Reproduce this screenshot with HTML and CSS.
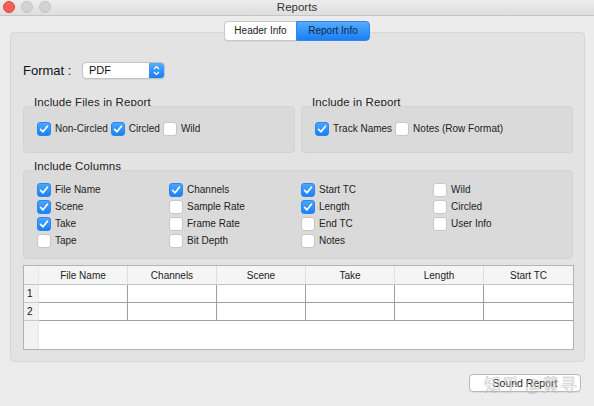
FILE: index.html
```html
<!DOCTYPE html>
<html>
<head>
<meta charset="utf-8">
<title>Reports</title>
<link rel="stylesheet" href="styles.css">
</head>
<body>
<div class="window">
  <div class="titlebar">
    <div class="lights">
      <span class="light red"></span>
      <span class="light"></span>
      <span class="light"></span>
    </div>
    <div class="title">Reports</div>
    <div></div>
  </div>

  <div class="tabs">
    <div class="tab">Header Info</div>
    <div class="tab active">Report Info</div>
  </div>

  <div class="panel">
    <div class="format-row">
      <span class="format-label">Format :</span>
      <div class="popup">
        <span class="popup-value">PDF</span>
        <span class="popup-arrows">
          <svg width="7" height="11" viewBox="0 0 7 11"><path d="M1 4 L3.5 1.5 L6 4 M1 7 L3.5 9.5 L6 7" fill="none" stroke="#fff" stroke-width="1.2"/></svg>
        </span>
      </div>
    </div>

    <div class="two-groups">
      <div class="group">
        <div class="group-label">Include Files in Report</div>
        <div class="group-box inline-box">
          <label class="cb"><span class="box on"><svg viewBox="0 0 14 14"><path d="M3.6 7.4 L6 9.8 L10.4 4.2"/></svg></span>Non-Circled</label>
          <label class="cb"><span class="box on"><svg viewBox="0 0 14 14"><path d="M3.6 7.4 L6 9.8 L10.4 4.2"/></svg></span>Circled</label>
          <label class="cb"><span class="box"></span>Wild</label>
        </div>
      </div>
      <div class="group">
        <div class="group-label">Include in Report</div>
        <div class="group-box inline-box">
          <label class="cb"><span class="box on"><svg viewBox="0 0 14 14"><path d="M3.6 7.4 L6 9.8 L10.4 4.2"/></svg></span>Track Names</label>
          <label class="cb"><span class="box"></span>Notes (Row Format)</label>
        </div>
      </div>
    </div>

    <div class="group columns-group">
      <div class="group-label">Include Columns</div>
      <div class="group-box columns-box">
        <label class="cb"><span class="box on"><svg viewBox="0 0 14 14"><path d="M3.6 7.4 L6 9.8 L10.4 4.2"/></svg></span>File Name</label>
        <label class="cb"><span class="box on"><svg viewBox="0 0 14 14"><path d="M3.6 7.4 L6 9.8 L10.4 4.2"/></svg></span>Channels</label>
        <label class="cb"><span class="box on"><svg viewBox="0 0 14 14"><path d="M3.6 7.4 L6 9.8 L10.4 4.2"/></svg></span>Start TC</label>
        <label class="cb"><span class="box"></span>Wild</label>

        <label class="cb"><span class="box on"><svg viewBox="0 0 14 14"><path d="M3.6 7.4 L6 9.8 L10.4 4.2"/></svg></span>Scene</label>
        <label class="cb"><span class="box"></span>Sample Rate</label>
        <label class="cb"><span class="box on"><svg viewBox="0 0 14 14"><path d="M3.6 7.4 L6 9.8 L10.4 4.2"/></svg></span>Length</label>
        <label class="cb"><span class="box"></span>Circled</label>

        <label class="cb"><span class="box on"><svg viewBox="0 0 14 14"><path d="M3.6 7.4 L6 9.8 L10.4 4.2"/></svg></span>Take</label>
        <label class="cb"><span class="box"></span>Frame Rate</label>
        <label class="cb"><span class="box"></span>End TC</label>
        <label class="cb"><span class="box"></span>User Info</label>

        <label class="cb"><span class="box"></span>Tape</label>
        <label class="cb"><span class="box"></span>Bit Depth</label>
        <label class="cb"><span class="box"></span>Notes</label>
        <span></span>
      </div>
    </div>

    <table class="grid">
      <colgroup>
        <col class="c-num">
        <col class="c-data">
        <col class="c-data">
        <col class="c-data">
        <col class="c-data">
        <col class="c-data">
        <col class="c-data">
      </colgroup>
      <thead>
        <tr>
          <th class="num"></th>
          <th>File Name</th>
          <th>Channels</th>
          <th>Scene</th>
          <th>Take</th>
          <th>Length</th>
          <th class="last">Start TC</th>
        </tr>
      </thead>
      <tbody>
        <tr>
          <td class="num">1</td>
          <td></td><td></td><td></td><td></td><td></td><td class="last"></td>
        </tr>
        <tr>
          <td class="num">2</td>
          <td></td><td></td><td></td><td></td><td></td><td class="last"></td>
        </tr>
        <tr class="filler">
          <td class="num"></td>
          <td colspan="6"></td>
        </tr>
      </tbody>
    </table>
  </div>

  <div class="footer">
    <button class="btn">Sound Report</button>
    <span class="watermark">知乎 @黄寻</span>
  </div>
</div>
</body>
</html>
```

FILE: styles.css
```css
* { box-sizing: border-box; }

html, body {
  margin: 0;
  padding: 0;
  background: #ececec;
}

body {
  font-family: "Liberation Sans", Arial, "Noto Sans CJK SC", sans-serif;
  color: #222;
  width: 594px;
  height: 406px;
  overflow: hidden;
}

.window {
  width: 594px;
  height: 406px;
  display: flex;
  flex-direction: column;
}

/* title bar */
.titlebar {
  height: 16px;
  display: grid;
  grid-template-columns: 1fr auto 1fr;
  align-items: center;
  background: linear-gradient(#ececec, #dedede);
  border-bottom: 1px solid #c6c6c6;
}

.lights {
  display: flex;
  gap: 6px;
  padding-left: 3px;
  align-items: center;
  margin-top: -1px;
}

.light {
  width: 12px;
  height: 12px;
  border-radius: 50%;
  background: #d3d3d3;
  border: 1px solid #c4c4c4;
}

.light.red {
  background: #fc5d57;
  border-color: #e0443e;
}

.title {
  font-size: 11.5px;
  color: #333;
  line-height: 15px;
}

/* tabs */
.tabs {
  display: flex;
  justify-content: center;
  margin-top: 5px;
  position: relative;
  z-index: 2;
}

.tab {
  height: 20px;
  font-size: 10px;
  line-height: 18px;
  text-align: center;
  color: #1a1a1a;
}

.tab:first-child {
  width: 72px;
  background: #fff;
  border: 1px solid #c9c9c9;
  border-right: none;
  border-radius: 4px 0 0 4px;
  box-shadow: 0 1px 0 rgba(0,0,0,0.06);
}

.tab.active {
  width: 74px;
  background: linear-gradient(#55abff, #1a7ef6);
  border: 1px solid #2d87f0;
  border-radius: 0 4px 4px 0;
  color: #10264a;
}

/* panel */
.panel {
  margin: -9px 9px 0 10px;
  height: 330px;
  background: #e3e3e3;
  border: 1px solid #d6d6d6;
  border-radius: 4px;
  padding: 29px 11px 0 12px;
  display: flex;
  flex-direction: column;
}

.format-row {
  display: flex;
  align-items: center;
  height: 17px;
}

.format-label {
  font-size: 13px;
  width: 59px;
  color: #111;
}

.popup {
  width: 83px;
  height: 17px;
  display: flex;
  background: #fff;
  border: 1px solid #c3c3c3;
  border-radius: 4px;
  box-shadow: 0 1px 0 rgba(0,0,0,0.05);
  overflow: hidden;
}

.popup-value {
  flex: 1;
  font-size: 11px;
  line-height: 15px;
  padding-left: 6px;
  color: #111;
}

.popup-arrows {
  width: 15px;
  background: linear-gradient(#55abff, #1a7ef6);
  display: flex;
  align-items: center;
  justify-content: center;
}

/* groups */
.two-groups {
  display: flex;
  gap: 6px;
  margin-top: 17px;
}

.group {
  flex: 1;
  display: flex;
  flex-direction: column;
}

.group-label {
  font-size: 11.5px;
  line-height: 13px;
  height: 13px;
  padding-left: 11px;
  margin-bottom: -3px;
  color: #222;
  letter-spacing: 0.1px;
}

.group-box {
  background: #dadada;
  border: 1px solid #d2d2d2;
  border-radius: 4px;
}

.inline-box {
  height: 47px;
  display: flex;
  align-items: flex-start;
  padding: 15px 0 0 13px;
}

.cb {
  display: flex;
  align-items: center;
  gap: 4px;
  font-size: 10px;
  line-height: 14px;
  height: 14px;
  color: #222;
  margin-right: 3px;
  white-space: nowrap;
}

.box {
  width: 14px;
  height: 14px;
  flex: none;
  border-radius: 3px;
  background: #fff;
  border: 1px solid #c6c6c6;
  display: flex;
  align-items: center;
  justify-content: center;
}

.box.on {
  background: linear-gradient(#4ba7ff, #1b80f6);
  border-color: #2a86f0;
}

.box svg {
  width: 14px;
  height: 14px;
  flex: none;
}

.box svg path {
  fill: none;
  stroke: #fff;
  stroke-width: 1.7;
  stroke-linecap: round;
  stroke-linejoin: round;
}

.columns-group {
  flex: none;
  margin-top: 7px;
}

.columns-box {
  height: 89px;
  display: grid;
  grid-template-columns: repeat(4, 132px);
  grid-template-rows: repeat(4, 17px);
  align-content: start;
  align-items: center;
  padding: 10px 0 0 13px;
}

/* table */
.grid {
  margin-top: 6px;
  width: 550px;
  table-layout: fixed;
  border-collapse: separate;
  border-spacing: 0;
  background: #fff;
  border: 1px solid #b3b3b3;
  font-size: 10px;
}

.c-num { width: 15px; }
.c-data { width: 89px; }

.grid th {
  height: 19px;
  font-weight: normal;
  background: #f5f5f5;
  color: #222;
  border-bottom: 1px solid #c4c4c4;
  border-right: 1px solid #dedede;
  padding: 0;
  text-align: center;
}

.grid th.last,
.grid td.last {
  border-right: none;
}

.grid td {
  height: 18px;
  padding: 0;
  border-right: 1px solid #9f9f9f;
  border-bottom: 1px solid #9f9f9f;
}

.grid .num {
  background: #f2f2f2;
  border-right: 1px solid #e6e6e6;
  border-bottom-color: #c9c9c9;
  text-align: left;
  padding-left: 3px;
  color: #111;
}

.grid th.num {
  border-bottom-color: #c4c4c4;
}

.grid .filler td {
  height: 28px;
  border-bottom: none;
  border-right: none;
}

.grid .filler td.num {
  border-right: 1px solid #e6e6e6;
}

/* footer */
.footer {
  display: flex;
  justify-content: flex-end;
  padding-right: 13px;
  margin-top: 12px;
  position: relative;
}

.btn {
  width: 112px;
  height: 18px;
  font-family: "Liberation Sans", Arial, sans-serif;
  font-size: 10.5px;
  color: #1a1a1a;
  background: #fff;
  border: 1px solid #b9b9b9;
  border-radius: 4px;
  box-shadow: 0 1px 0 rgba(0,0,0,0.06);
  padding: 0;
  line-height: 16px;
}

.watermark {
  position: absolute;
  right: 16px;
  top: -3px;
  font-family: "Noto Sans CJK SC", sans-serif;
  font-size: 17px;
  color: rgba(255,255,255,0.55);
  -webkit-text-stroke: 0.6px rgba(120,120,120,0.45);
  letter-spacing: 1px;
  pointer-events: none;
}
```
